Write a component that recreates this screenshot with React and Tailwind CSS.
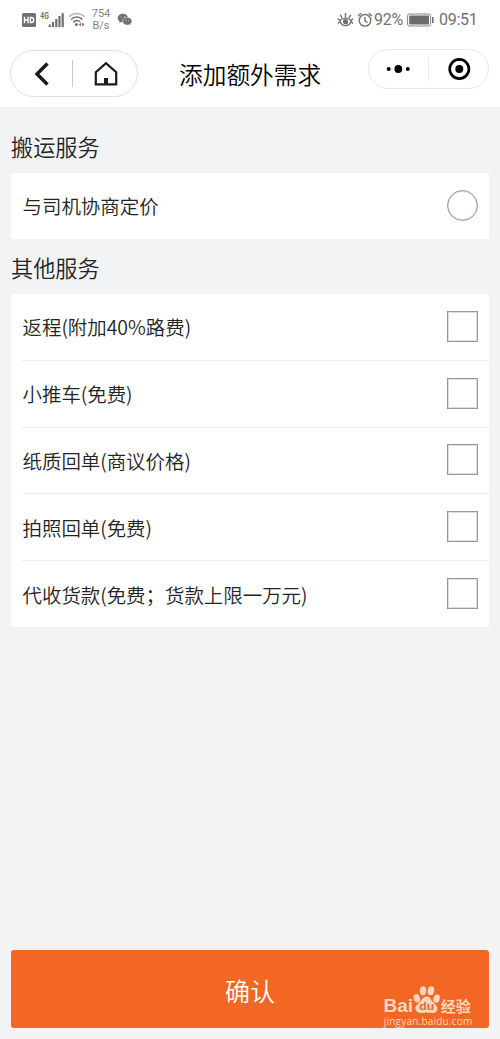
import React from "react";

const extras = [
  "返程(附加40%路费)",
  "小推车(免费)",
  "纸质回单(商议价格)",
  "拍照回单(免费)",
  "代收货款(免费；货款上限一万元)",
];

function Signal() {
  return (
    <svg width="25" height="18" viewBox="0 0 25 18" className="ml-[4px] shrink-0" fill="#707070">
      <text x="0.3" y="7.6" fontSize="9.5" fontWeight="700" fontFamily="Roboto, sans-serif" textLength="8.5" lengthAdjust="spacingAndGlyphs">4G</text>
      <rect x="8.6" y="13.500" width="2.200" height="2.6" />
      <rect x="11.9" y="11" width="2.200" height="5.1" />
      <rect x="15.2" y="8" width="2.200" height="8.1" />
      <rect x="18.4" y="5" width="2.200" height="11.1" />
      <rect x="21.6" y="2.2" width="2.200" height="13.9" />
    </svg>
  );
}

function Wifi() {
  return (
    <svg width="18" height="16" viewBox="0 0 18 16" className="ml-[3px] shrink-0" fill="none" strokeWidth="1.5">
      <path d="M1 4.8C5.2.3 12.5.3 16.5 4.8" stroke="#b5b5b5" />
      <path d="M3 7.5C6.2 4 11.4 4 14.5 7.5" stroke="#707070" />
      <path d="M5.2 10.2C7.2 8 10.3 8 12 9.8" stroke="#707070" />
      <circle cx="8.4" cy="12.4" r="1.5" fill="#707070" />
      <path d="m13 10.3-2.2 2.1 2.2 2.1zM14.2 10.3l2.3 2.1-2.3 2.1z" fill="#707070" />
    </svg>
  );
}

function Chat() {
  return (
    <svg width="16" height="14" viewBox="0 0 16 14" className="ml-[6px] shrink-0">
      <path d="M6 .8C2.9.8.7 2.6.7 5c0 1.4.7 2.5 1.9 3.3l-.4 1.6 1.9-.9c.8.2 1.4.3 2.2.3C9.100 9 11 7.200 11 5 11 2.600 8.900.8 6 .8z" fill="#707070" />
      <path d="M10.200 4.300c-2.700 0-4.700 1.700-4.700 3.900s2 3.900 4.700 3.900c.6 0 1.200-.1 1.700-.3l1.700.9-.4-1.500c1-.7 1.700-1.800 1.700-3 0-2.200-2-3.900-4.700-3.900z" fill="#707070" stroke="#fff" strokeWidth=".5" />
      <g fill="#ddd"><circle cx="4.100" cy="3.700" r=".55" /><circle cx="7.400" cy="3.500" r=".55" /><circle cx="8.700" cy="7.200" r=".5" /><circle cx="11.700" cy="7.200" r=".5" /></g>
    </svg>
  );
}

function Eye() {
  return (
    <svg width="17" height="16" viewBox="0 0 17 16" className="shrink-0" fill="none" stroke="#707070" strokeWidth="1.400">
      <path d="M.8 6.800 3 8.500C5.600 5.300 11.400 5.300 14 8.500l2.200-1.700M1 11.500 3 9.500C5.200 15 11.800 15 14 9.500l2 2" />
      <path d="M8.500 1v4.500M3.200 2.800l2 3M13.800 2.800l-2 3" />
      <circle cx="8.500" cy="9.700" r="1.900" fill="#707070" />
    </svg>
  );
}

function Alarm() {
  return (
    <svg width="16" height="16" viewBox="0 0 16 16" className="ml-[3px] shrink-0" fill="none" stroke="#707070" strokeWidth="1.4">
      <circle cx="8" cy="8.300" r="5.800" />
      <path d="M1.200 4 4.300 1.300M14.800 4l-3.100-2.700M8 5v4l2.600 1.500" />
    </svg>
  );
}

function Battery() {
  return (
    <svg width="28" height="14" viewBox="0 0 28 14" className="ml-[3px] shrink-0">
      <rect x="0.600" y="1" width="23" height="12" rx="1.500" fill="none" stroke="#858585" />
      <rect x="2.200" y="2.500" width="19.800" height="9" fill="#6b6b6b" />
      <rect x="25" y="4" width="1.600" height="6" fill="#707070" />
    </svg>
  );
}

function StatusBar() {
  return (
    <div className="flex h-10 items-center pl-[22px] font-[Roboto,sans-serif] text-[#707070]">
      <svg width="14" height="14" viewBox="0 0 14 14" className="shrink-0">
        <rect width="14" height="14" rx="1.500" fill="#707070" />
        <path d="M2.500 3.800v6.400M6 3.800v6.400M2.500 7H6M8.400 4.500v5h1.200c2.800 0 2.800-5 0-5z" fill="none" stroke="#fff" strokeWidth="1.400" />
      </svg>
      <Signal />
      <Wifi />
      <div className="ml-[5px] w-[20px] text-center text-[11px] leading-[12.500px] text-[#858585]">
        <div>754</div>
        <div>B/s</div>
      </div>
      <Chat />
      <div className="ml-auto flex items-center pr-[22px]">
        <Eye />
        <Alarm />
        <span className="ml-[1px] w-[30px] text-[16px] tracking-[-0.300px]">92%</span>
        <Battery />
        <span className="ml-[4px] w-[39px] text-[16px] tracking-[-0.300px]">09:51</span>
      </div>
    </div>
  );
}

function NavBar() {
  return (
    <header className="flex h-[67px] items-start pl-[10px] pr-[11px]">
      <div className="mt-[10px] flex h-[47px] w-[128px] shrink-0 items-center rounded-full border border-[#e0e0e0]">
        <svg width="14" height="26" viewBox="0 0 14 26" className="ml-[23.500px]" fill="none" stroke="#1b1b1b" strokeWidth="3.400">
          <path d="M12.500 2.500 2 13l10.500 10.500" />
        </svg>
        <div className="ml-[23.500px] h-[27px] w-px bg-[#cacaca]" />
        <svg width="26" height="26" viewBox="0 0 26 26" className="ml-[19.500px]" fill="none" stroke="#1b1b1b" strokeWidth="2.200">
          <path d="M2.800 11.200 13 2.200l10.200 9v12.200H2.800z" />
          <path d="M13 24v-7" strokeWidth="4" />
        </svg>
      </div>
      <h1 className="ml-[41px] mt-[16px] whitespace-nowrap text-[23.700px] font-[350] leading-[36px] text-black">添加额外需求</h1>
      <div className="ml-auto mt-[9px] flex h-10 w-[121px] shrink-0 items-center rounded-full border border-[#e8e8e8]">
        <svg width="26" height="10" viewBox="0 0 26 10" className="ml-4">
          <circle cx="3.700" cy="5" r="2" />
          <circle cx="13.300" cy="5" r="3.900" />
          <circle cx="22.800" cy="5" r="2" />
        </svg>
        <div className="ml-[17px] h-6 w-px bg-[#eaeaea]" />
        <svg width="24" height="24" viewBox="0 0 24 24" className="ml-[18px]">
          <circle cx="12.300" cy="12" r="9.600" fill="none" stroke="#000" strokeWidth="2.700" />
          <circle cx="12.300" cy="12" r="4" />
        </svg>
      </div>
    </header>
  );
}

function Watermark() {
  return (
    <div className="absolute bottom-[-1px] right-[14px] w-[92px] text-[#ffd6bf]">
      <svg width="92" height="44" viewBox="0 0 92 44" fill="currentColor">
        <text x="0.500" y="27" fontSize="17.500" fontWeight="700" fontFamily="Liberation Sans, Arial, sans-serif" textLength="29.500" lengthAdjust="spacingAndGlyphs">Bai</text>
        <ellipse cx="33.800" cy="13.300" rx="3.100" ry="4.200" transform="rotate(-15 33.800 13.300)" />
        <ellipse cx="40" cy="5.800" rx="3.200" ry="4.500" />
        <ellipse cx="48" cy="5.800" rx="3.200" ry="4.500" transform="rotate(10 48 5.800)" />
        <ellipse cx="53.600" cy="13.600" rx="3.100" ry="4.200" transform="rotate(15 53.600 13.600)" />
        <path d="M43.700 11.500c-3.400 0-4.500 3.300-7.200 5.800-3 2.600-5.200 5-3.600 8 2 4.100 6.600 2.100 10.800 2.100s8.600 2.100 10.400-2.200c1.200-3-1.200-5.400-3.700-7.700-2.500-2.500-3.600-6-6.700-6z" />
        <text x="36.300" y="25" fontSize="11" fontWeight="700" fill="#f26724" fontFamily="Liberation Sans, Arial, sans-serif" textLength="15" lengthAdjust="spacingAndGlyphs">du</text>
        <text x="57.800" y="26.500" fontSize="14.500" fontWeight="700" fontFamily="Noto Sans CJK SC, sans-serif" textLength="30" lengthAdjust="spacingAndGlyphs">经验</text>
        <text x="0.800" y="40" fontSize="10" fontWeight="500" fontFamily="Open Sans, sans-serif" textLength="88.500" lengthAdjust="spacing">jingyan.baidu.com</text>
      </svg>
    </div>
  );
}

export default function App() {
  return (
    <div className="flex h-[1039px] w-[500px] flex-col overflow-hidden bg-[#f2f3f5] font-['Noto_Sans_CJK_SC',sans-serif] font-[350] text-[#242424]">
      <div className="bg-white font-normal">
        <StatusBar />
        <NavBar />
      </div>
      <main className="px-[11px]">
        <h2 className="flex h-[66px] items-center pt-[14px] text-[22.200px] font-[350]">搬运服务</h2>
        <label className="flex h-[66px] items-center justify-between bg-white pl-[11.500px] pr-[11px] text-[19.450px]">
          与司机协商定价
          <input type="radio" name="moving" className="mb-[2px] size-[31px] appearance-none rounded-full border border-[#999] shadow-[inset_0_0_0_1px_#dedede]" />
        </label>
        <h2 className="flex h-[55px] items-center pt-[3px] text-[22.200px] font-[350]">其他服务</h2>
        <div className="bg-white pl-[11px]">
          {extras.map((text) => (
            <label key={text} className="flex h-[66.800px] items-center justify-between border-b border-[#ededed] pl-[0.500px] pr-[11px] text-[19.450px] last:h-[65.800px] last:border-b-0">
              {text}
              <input type="checkbox" className="mb-[1px] size-[31px] appearance-none border border-[#999] shadow-[inset_0_0_0_1px_#dedede]" />
            </label>
          ))}
        </div>
      </main>
      <div className="relative mx-[11px] mb-[11px] mt-auto">
        <button className="h-[78px] w-full rounded-[3px] bg-[#f26724] pt-[3px] text-[25px] font-[350] text-white">确认</button>
        <Watermark />
      </div>
    </div>
  );
}
